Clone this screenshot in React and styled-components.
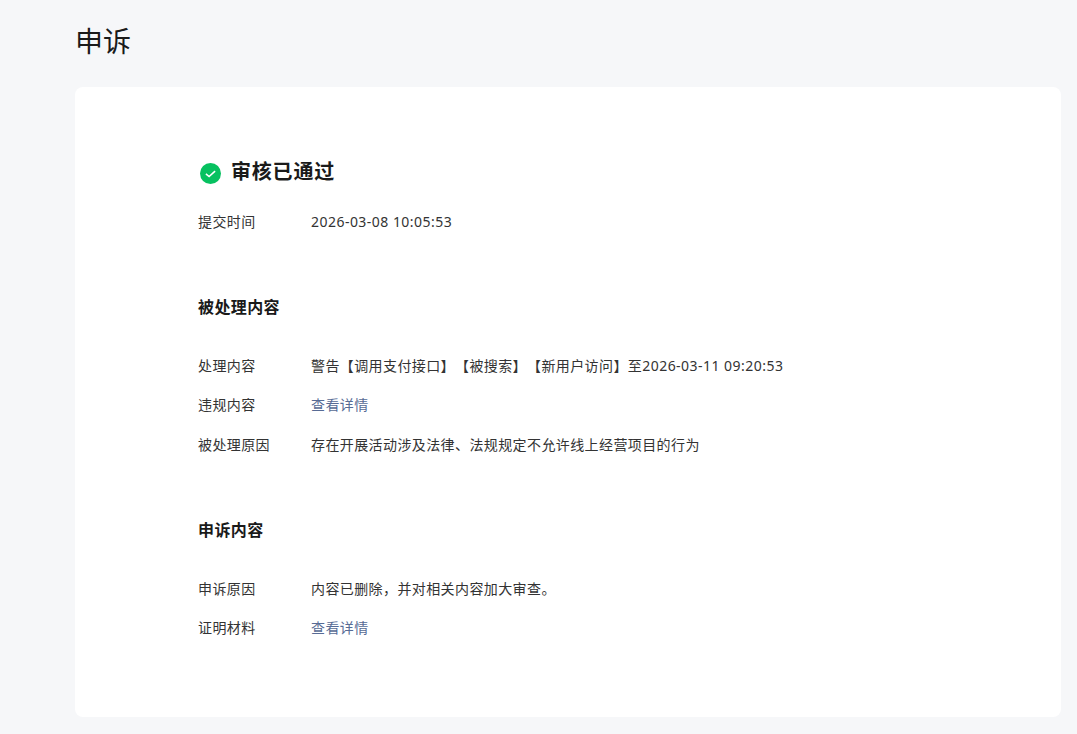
import React from 'react'
import styled, { createGlobalStyle } from 'styled-components'

const GlobalStyle = createGlobalStyle`
  html, body {
    margin: 0;
    padding: 0;
    background: #f6f7f9;
  }
  body {
    font-family: "Noto Sans", "Noto Sans CJK SC", "Liberation Sans", sans-serif;
    color: #1d2129;
    text-spacing-trim: space-all;
    letter-spacing: 0.4px;
  }
`

const Page = styled.main`
  box-sizing: border-box;
  height: 734px;
  overflow: hidden;
  padding: 0 16px 0 75px;
`

const PageTitle = styled.h1`
  margin: 0;
  height: 87px;
  padding-top: 21px;
  box-sizing: border-box;
  font-size: 28px;
  line-height: 40px;
  font-weight: 400;
  letter-spacing: 0;
  color: #1a1a1a;
`

const Card = styled.section`
  box-sizing: border-box;
  height: 630px;
  padding: 70px 123px 0;
  background: #fff;
  border-radius: 8px;
`

const StatusHeading = styled.div`
  display: flex;
  align-items: center;
  gap: 10px;
  height: 30px;
  margin-bottom: 25px;
  padding-left: 2px;
  font-size: 20px;
  line-height: 30px;
  font-weight: 700;
  letter-spacing: 0.8px;
  color: #1a1a1a;
`

const StatusSvg = styled.svg`
  width: 21px;
  height: 21px;
  margin-top: 2px;
`

const Section = styled.div`
  margin-top: ${(p) => p.$top || 0}px;
`

const SectionTitle = styled.h2`
  margin: 0 0 36.5px;
  font-size: 16px;
  line-height: 24px;
  font-weight: 700;
  color: #1a1a1a;
`

const Row = styled.div`
  display: flex;
  font-size: 14px;
  line-height: 20px;
  color: #333;
  & + & {
    margin-top: 19.5px;
  }
`

const Label = styled.div`
  flex: 0 0 113px;
`

const Value = styled.div`
  flex: 1;
`

const Timestamp = styled.span`
  letter-spacing: 0.47px;
`

const DetailLink = styled.a`
  color: #576b95;
  text-decoration: none;
  cursor: pointer;
`

const StatusIcon = () => (
  <StatusSvg viewBox="0 0 21 21" aria-hidden="true">
    <circle cx="10.5" cy="10.5" r="10.5" fill="#07c160" />
    <path d="M5.9 10.9l3.2 2.6 6-5.3" fill="none" stroke="#fff" strokeWidth="1.6" />
  </StatusSvg>
)

const App = () => (
  <>
    <GlobalStyle />
    <Page>
      <PageTitle>申诉</PageTitle>
      <Card>
        <StatusHeading>
          <StatusIcon />
          审核已通过
        </StatusHeading>
        <Row>
          <Label>提交时间</Label>
          <Value>
            <Timestamp>2026-03-08 10:05:53</Timestamp>
          </Value>
        </Row>
        <Section $top={63}>
          <SectionTitle>被处理内容</SectionTitle>
          <Row>
            <Label>处理内容</Label>
            <Value>
              警告【调用支付接口】【被搜索】【新用户访问】至<Timestamp>2026-03-11 09:20:53</Timestamp>
            </Value>
          </Row>
          <Row>
            <Label>违规内容</Label>
            <Value>
              <DetailLink>查看详情</DetailLink>
            </Value>
          </Row>
          <Row>
            <Label>被处理原因</Label>
            <Value>存在开展活动涉及法律、法规规定不允许线上经营项目的行为</Value>
          </Row>
        </Section>
        <Section $top={63.5}>
          <SectionTitle>申诉内容</SectionTitle>
          <Row>
            <Label>申诉原因</Label>
            <Value>内容已删除，并对相关内容加大审查。</Value>
          </Row>
          <Row>
            <Label>证明材料</Label>
            <Value>
              <DetailLink>查看详情</DetailLink>
            </Value>
          </Row>
        </Section>
      </Card>
    </Page>
  </>
)

export default App
